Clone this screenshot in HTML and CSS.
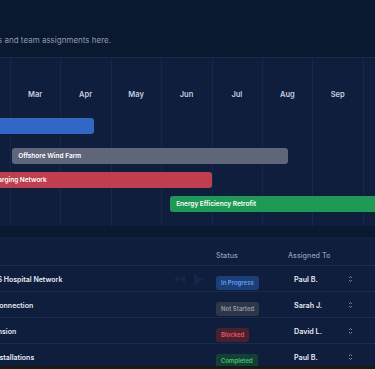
FILE: index.html
```html
<!DOCTYPE html>
<html lang="en">
<head>
<meta charset="utf-8">
<title>Project Timeline</title>
<link rel="stylesheet" href="styles.css">
</head>
<body>
<div class="viewport">
  <header class="intro">
    <p class="subtitle">Track project timelines and team assignments here.</p>
  </header>

  <section class="gantt">
    <div class="track">
      <div class="months">
        <span>Jan</span><span>Feb</span><span>Mar</span><span>Apr</span><span>May</span><span>Jun</span>
        <span>Jul</span><span>Aug</span><span>Sep</span><span>Oct</span><span>Nov</span><span>Dec</span>
      </div>
      <div class="bars">
        <div class="bar bar-blue" style="margin-left:25px;width:160px">Solar Farm Phase 1</div>
        <div class="bar bar-gray" style="margin-left:103px;width:276px">Offshore Wind Farm</div>
        <div class="bar bar-red" style="margin-left:64px;width:239px">EV Charging Network</div>
        <div class="bar bar-green" style="margin-left:261px;width:320px">Energy Efficiency Retrofit</div>
      </div>
    </div>
  </section>

  <section class="tasks">
    <div class="table">
      <div class="row head">
        <div class="cell">Task</div>
        <div class="cell">Status</div>
        <div class="cell">Assigned To</div>
      </div>
      <div class="row">
        <div class="cell task">
          <span>CHP – NHS Hospital Network</span>
          <span class="ghost">
            <svg width="11" height="8" viewBox="0 0 11 8"><path d="M5 0 L0 4 L5 8Z M11 0 L6 4 L11 8Z" fill="#15264a"/></svg>
            <svg width="10" height="11" viewBox="0 0 10 11"><path d="M0 0 L10 5.5 L0 11Z" fill="#15264a"/></svg>
          </span>
        </div>
        <div class="cell"><span class="badge progress">In Progress</span></div>
        <div class="cell"><div class="select"><span>Paul B.</span><svg class="chev" width="5" height="8" viewBox="0 0 5 8"><path d="M1 3 L2.5 1.5 L4 3 M1 5 L2.5 6.5 L4 5" fill="none" stroke="#7f8ba3" stroke-width="0.9"/></svg></div></div>
      </div>
      <div class="row">
        <div class="cell task"><span>Charger Connection</span></div>
        <div class="cell"><span class="badge idle">Not Started</span></div>
        <div class="cell"><div class="select"><span>Sarah J.</span><svg class="chev" width="5" height="8" viewBox="0 0 5 8"><path d="M1 3 L2.5 1.5 L4 3 M1 5 L2.5 6.5 L4 5" fill="none" stroke="#7f8ba3" stroke-width="0.9"/></svg></div></div>
      </div>
      <div class="row">
        <div class="cell task"><span>Grid Expansion</span></div>
        <div class="cell"><span class="badge blocked">Blocked</span></div>
        <div class="cell"><div class="select"><span>David L.</span><svg class="chev" width="5" height="8" viewBox="0 0 5 8"><path d="M1 3 L2.5 1.5 L4 3 M1 5 L2.5 6.5 L4 5" fill="none" stroke="#7f8ba3" stroke-width="0.9"/></svg></div></div>
      </div>
      <div class="row">
        <div class="cell task"><span>Rooftop Installations</span></div>
        <div class="cell"><span class="badge done">Completed</span></div>
        <div class="cell"><div class="select"><span>Paul B.</span><svg class="chev" width="5" height="8" viewBox="0 0 5 8"><path d="M1 3 L2.5 1.5 L4 3 M1 5 L2.5 6.5 L4 5" fill="none" stroke="#7f8ba3" stroke-width="0.9"/></svg></div></div>
      </div>
    </div>
  </section>
  <div class="scrollbar"></div>
</div>
</body>
</html>
```

FILE: styles.css
```css
* { box-sizing: border-box; }

body {
  margin: 0;
  background: #0a1830;
  font-family: Inter, "Noto Sans", sans-serif;
}

.viewport {
  width: 375px;
  height: 369px;
  overflow: hidden;
}

.intro {
  height: 57px;
  padding-top: 34px;
}

.subtitle {
  margin: 0 0 0 -83.5px;
  font-size: 8px;
  line-height: 12px;
  color: #8d99b0;
  white-space: nowrap;
}

.gantt {
  height: 169px;
  background: #101e3d;
  border-top: 1px solid #1b2a4b;
  overflow: hidden;
}

.track {
  margin-left: -90.86px;
  width: 605px;
  height: 100%;
  background-image: repeating-linear-gradient(to right, #17264a 0 1px, transparent 1px 50.43px);
}

.months {
  display: grid;
  grid-template-columns: repeat(12, 50.43px);
  padding-top: 31px;
}

.months span {
  text-align: center;
  font-size: 7.5px;
  font-weight: 600;
  line-height: 12px;
  color: #c3cde0;
}

.bars {
  display: flex;
  flex-direction: column;
  align-items: flex-start;
}

.bar {
  height: 16px;
  border-radius: 3px;
  padding-left: 6px;
  font-size: 6.5px;
  font-weight: 600;
  line-height: 16px;
  color: #ffffff;
  white-space: nowrap;
  overflow: hidden;
}

.bar-blue { margin-top: 17px; background: #3367c6; }
.bar-gray { margin-top: 14px; background: #5f6679; }
.bar-red { margin-top: 8px; background: #bf3f4e; }
.bar-green { margin-top: 8px; background: #1f9a56; }

.tasks {
  margin-top: 11px;
  height: 129px;
  background: #101e3d;
  overflow: hidden;
}

.table {
  margin-left: -35px;
}

.row {
  display: grid;
  grid-template-columns: 251px 72px 70px 1fr;
  height: 26px;
  padding-top: 1px;
  border-bottom: 1px solid #1a2a4b;
  align-items: center;
}

.row.head {
  height: 29px;
  align-items: start;
  padding-top: 14px;
}

.head .cell {
  font-size: 7.2px;
  font-weight: 500;
  line-height: 10px;
  color: #8e9ab3;
}

.cell {
  white-space: nowrap;
}

.task {
  display: flex;
  align-items: center;
  justify-content: space-between;
  padding-right: 12px;
  font-size: 7px;
  font-weight: 600;
  color: #e3e9f3;
}

.ghost {
  display: flex;
  align-items: center;
  gap: 9px;
}

.badge {
  display: inline-block;
  height: 14px;
  padding: 0 5px;
  border-radius: 3px;
  font-size: 6px;
  font-weight: 600;
  line-height: 14px;
}

.progress { background: #1d3e76; color: #5ea2f4; }
.idle { background: #2e3747; color: #8f99a8; }
.blocked { background: #4a1f2e; color: #e3586a; }
.done { background: #143f34; color: #3dc470; }

.select {
  display: flex;
  align-items: center;
  justify-content: space-between;
  padding: 0 5px 0 6px;
  font-size: 7.2px;
  font-weight: 600;
  color: #e6ebf5;
}

.chev { display: block; }

.scrollbar {
  height: 3px;
  background: #1a1b17;
}
```
